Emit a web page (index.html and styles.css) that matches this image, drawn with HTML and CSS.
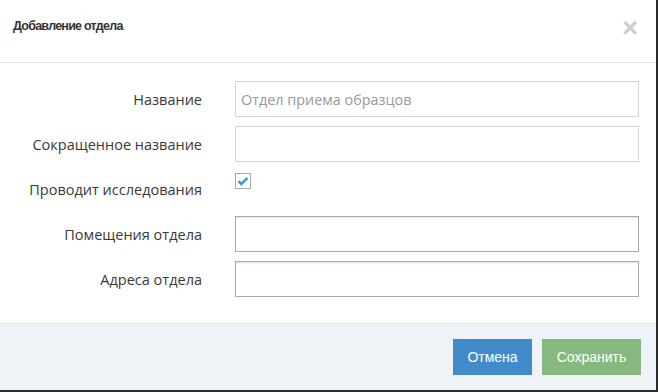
FILE: index.html
```html
<!DOCTYPE html>
<html lang="ru">
<head>
<meta charset="utf-8"/>
<title>Добавление отдела</title>
<link rel="stylesheet" href="styles.css">
</head>
<body>
<div class="modal-content">
  <div class="modal-header">
    <h4 class="modal-title">Добавление отдела</h4>
    <button class="close" type="button">&times;</button>
  </div>
  <form class="modal-body">
    <div class="form-row">
      <label class="form-label">Название</label>
      <input class="form-input" type="text" placeholder="Отдел приема образцов"/>
    </div>
    <div class="form-row">
      <label class="form-label">Сокращенное название</label>
      <input class="form-input" type="text"/>
    </div>
    <div class="form-row">
      <label class="form-label">Проводит исследования</label>
      <span class="check">
        <svg width="12" height="10" viewBox="0 0 12 10"><path d="M1.5 5.2 L4.4 8 L10.5 1.8" fill="none" stroke="#32a3ce" stroke-width="2.6"/></svg>
      </span>
    </div>
    <div class="form-row">
      <label class="form-label">Помещения отдела</label>
      <input class="form-input form-input-dark" type="text"/>
    </div>
    <div class="form-row">
      <label class="form-label">Адреса отдела</label>
      <input class="form-input form-input-dark" type="text"/>
    </div>
  </form>
  <div class="modal-footer">
    <button class="btn btn-primary" type="button">Отмена</button>
    <button class="btn btn-success" type="button">Сохранить</button>
  </div>
</div>
</body>
</html>
```

FILE: styles.css
```css
body {
    margin: 0;
    background: #2b2b2b;
    font-family: "Liberation Sans", Arial, sans-serif;
    color: #333;
}

.modal-content {
    width: 656px;
    height: 390px;
    background: #fff;
    display: flex;
    flex-direction: column;
}

.modal-header {
    height: 63px;
    box-sizing: border-box;
    border-bottom: 1px solid #e5e5e5;
    display: flex;
    justify-content: space-between;
    align-items: flex-start;
    padding: 17px 18px 0 13px;
}

.modal-title {
    margin: 0;
    font-size: 12.5px;
    font-weight: bold;
    letter-spacing: -0.75px;
    line-height: 18px;
    color: #333;
}

.close {
    border: none;
    background: none;
    padding: 0;
    margin-top: 1px;
    font-family: "Liberation Sans", Arial, sans-serif;
    font-size: 27px;
    font-weight: bold;
    line-height: 20px;
    color: #ccc;
    cursor: pointer;
}

.modal-body {
    flex: 1;
    margin: 0;
    padding: 18px 17px 0 0;
    display: flex;
    flex-direction: column;
    gap: 9px;
}

.form-row {
    display: grid;
    grid-template-columns: 202px 1fr;
    column-gap: 33px;
    align-items: center;
    height: 36px;
}

.form-label {
    text-align: right;
    font-family: "Open Sans", sans-serif;
    font-size: 14.5px;
    color: #393939;
}

.form-input {
    height: 36px;
    box-sizing: border-box;
    border: 1px solid #d5d5d5;
    padding: 0 5px;
    font-family: "Open Sans", sans-serif;
    font-size: 14.4px;
    color: #555;
    outline: none;
}

.form-input::placeholder {
    color: #999;
}

.form-input-dark {
    border-color: #aaa;
    box-shadow: inset 0 3px 3px -2px rgba(0,0,0,0.12);
}

.check {
    align-self: start;
    margin-top: 2px;
    width: 16px;
    height: 16px;
    box-sizing: border-box;
    border: 1px solid #aaa;
    background: #fff;
    display: flex;
    align-items: center;
    justify-content: center;
}

.modal-footer {
    height: 67px;
    box-sizing: border-box;
    border-top: 1px solid #e4e9ee;
    background: #eff3f8;
    display: flex;
    justify-content: flex-end;
    align-items: center;
    gap: 10px;
    padding: 0 15px;
}

.btn {
    height: 36px;
    border: none;
    color: #fff;
    font-family: "Liberation Sans", Arial, sans-serif;
    font-size: 14px;
    padding: 0 14px;
    cursor: pointer;
}

.btn-primary {
    background: #428bca;
    width: 79px;
}

.btn-success {
    background: #87b87f;
    width: 99px;
}
```
